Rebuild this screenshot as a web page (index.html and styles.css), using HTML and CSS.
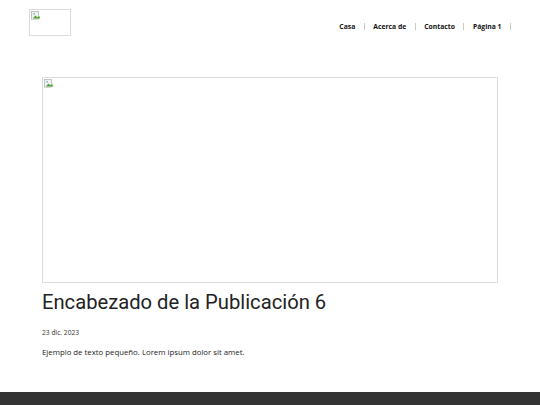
FILE: index.html
```html
<!DOCTYPE html>
<html lang="es">
<head>
<meta charset="utf-8">
<title>Publicación 6</title>
<link rel="stylesheet" href="styles.css">
</head>
<body>
<div class="page">
  <header class="header">
    <div class="logo broken">
      <svg class="broken-icon" width="10" height="10" viewBox="0 0 16 16"><rect x="1" y="1" width="11" height="12" fill="#f2f2f2" stroke="#9aa" stroke-width="1"/><path d="M3 12 L7 7 L10 10 L13 8 L15 12 Z" fill="#5a9e3b"/><circle cx="5" cy="4.5" r="1.5" fill="#7bb"/></svg>
    </div>
    <nav class="nav">
      <a class="nav-item">Casa</a><span class="sep"></span>
      <a class="nav-item">Acerca de</a><span class="sep"></span>
      <a class="nav-item">Contacto</a><span class="sep"></span>
      <a class="nav-item">Página 1</a><span class="sep"></span>
    </nav>
  </header>
  <main class="main">
    <article class="post">
      <div class="post-image broken">
        <svg class="broken-icon" width="10" height="10" viewBox="0 0 16 16"><rect x="1" y="1" width="11" height="12" fill="#f2f2f2" stroke="#9aa" stroke-width="1"/><path d="M3 12 L7 7 L10 10 L13 8 L15 12 Z" fill="#5a9e3b"/><circle cx="5" cy="4.5" r="1.5" fill="#7bb"/></svg>
      </div>
      <h1 class="post-title">Encabezado de la Publicación 6</h1>
      <p class="post-date">23 dic. 2023</p>
      <p class="post-text">Ejemplo de texto pequeño. Lorem ipsum dolor sit amet.</p>
    </article>
  </main>
  <footer class="footer"></footer>
</div>
</body>
</html>
```
FILE: styles.css
```css
html, body {
  margin: 0;
  padding: 0;
  background: #fff;
}
body {
  font-family: "Open Sans", "Liberation Sans", sans-serif;
  color: #222;
}
.page {
  display: flex;
  flex-direction: column;
  min-height: 405px;
}
.header {
  display: flex;
  justify-content: space-between;
  align-items: flex-start;
  padding: 9px 29px 0 29px;
}
.broken {
  box-sizing: border-box;
  border: 1px solid #dcdcdc;
  position: relative;
}
.broken-icon {
  position: absolute;
  left: 1px;
  top: 1px;
}
.logo {
  width: 42px;
  height: 27px;
}
.nav {
  display: flex;
  align-items: center;
  font-size: 6.8px;
  font-weight: 700;
  color: #111;
  margin-top: 13px;
}
.nav-item {
  display: block;
}
.sep {
  display: block;
  width: 1px;
  height: 7px;
  background: #c8c8c8;
  margin: 0 8.5px;
}
.sep:last-child {
  margin-right: 0;
}
.main {
  flex: 1;
  padding: 41px 42px 0 42px;
}
.post-image {
  width: 456px;
  height: 206px;
}
.post-title {
  font-family: Roboto, "Liberation Sans", sans-serif;
  font-weight: 400;
  font-size: 20.2px;
  line-height: 24px;
  margin: 7px 0 0 0;
  color: #222;
}
.post-date {
  font-size: 6.7px;
  margin: 14px 0 0 0;
  color: #333;
}
.post-text {
  font-size: 7.8px;
  margin: 10px 0 0 0;
  color: #222;
}
.footer {
  height: 13px;
  background: #333;
}
```
